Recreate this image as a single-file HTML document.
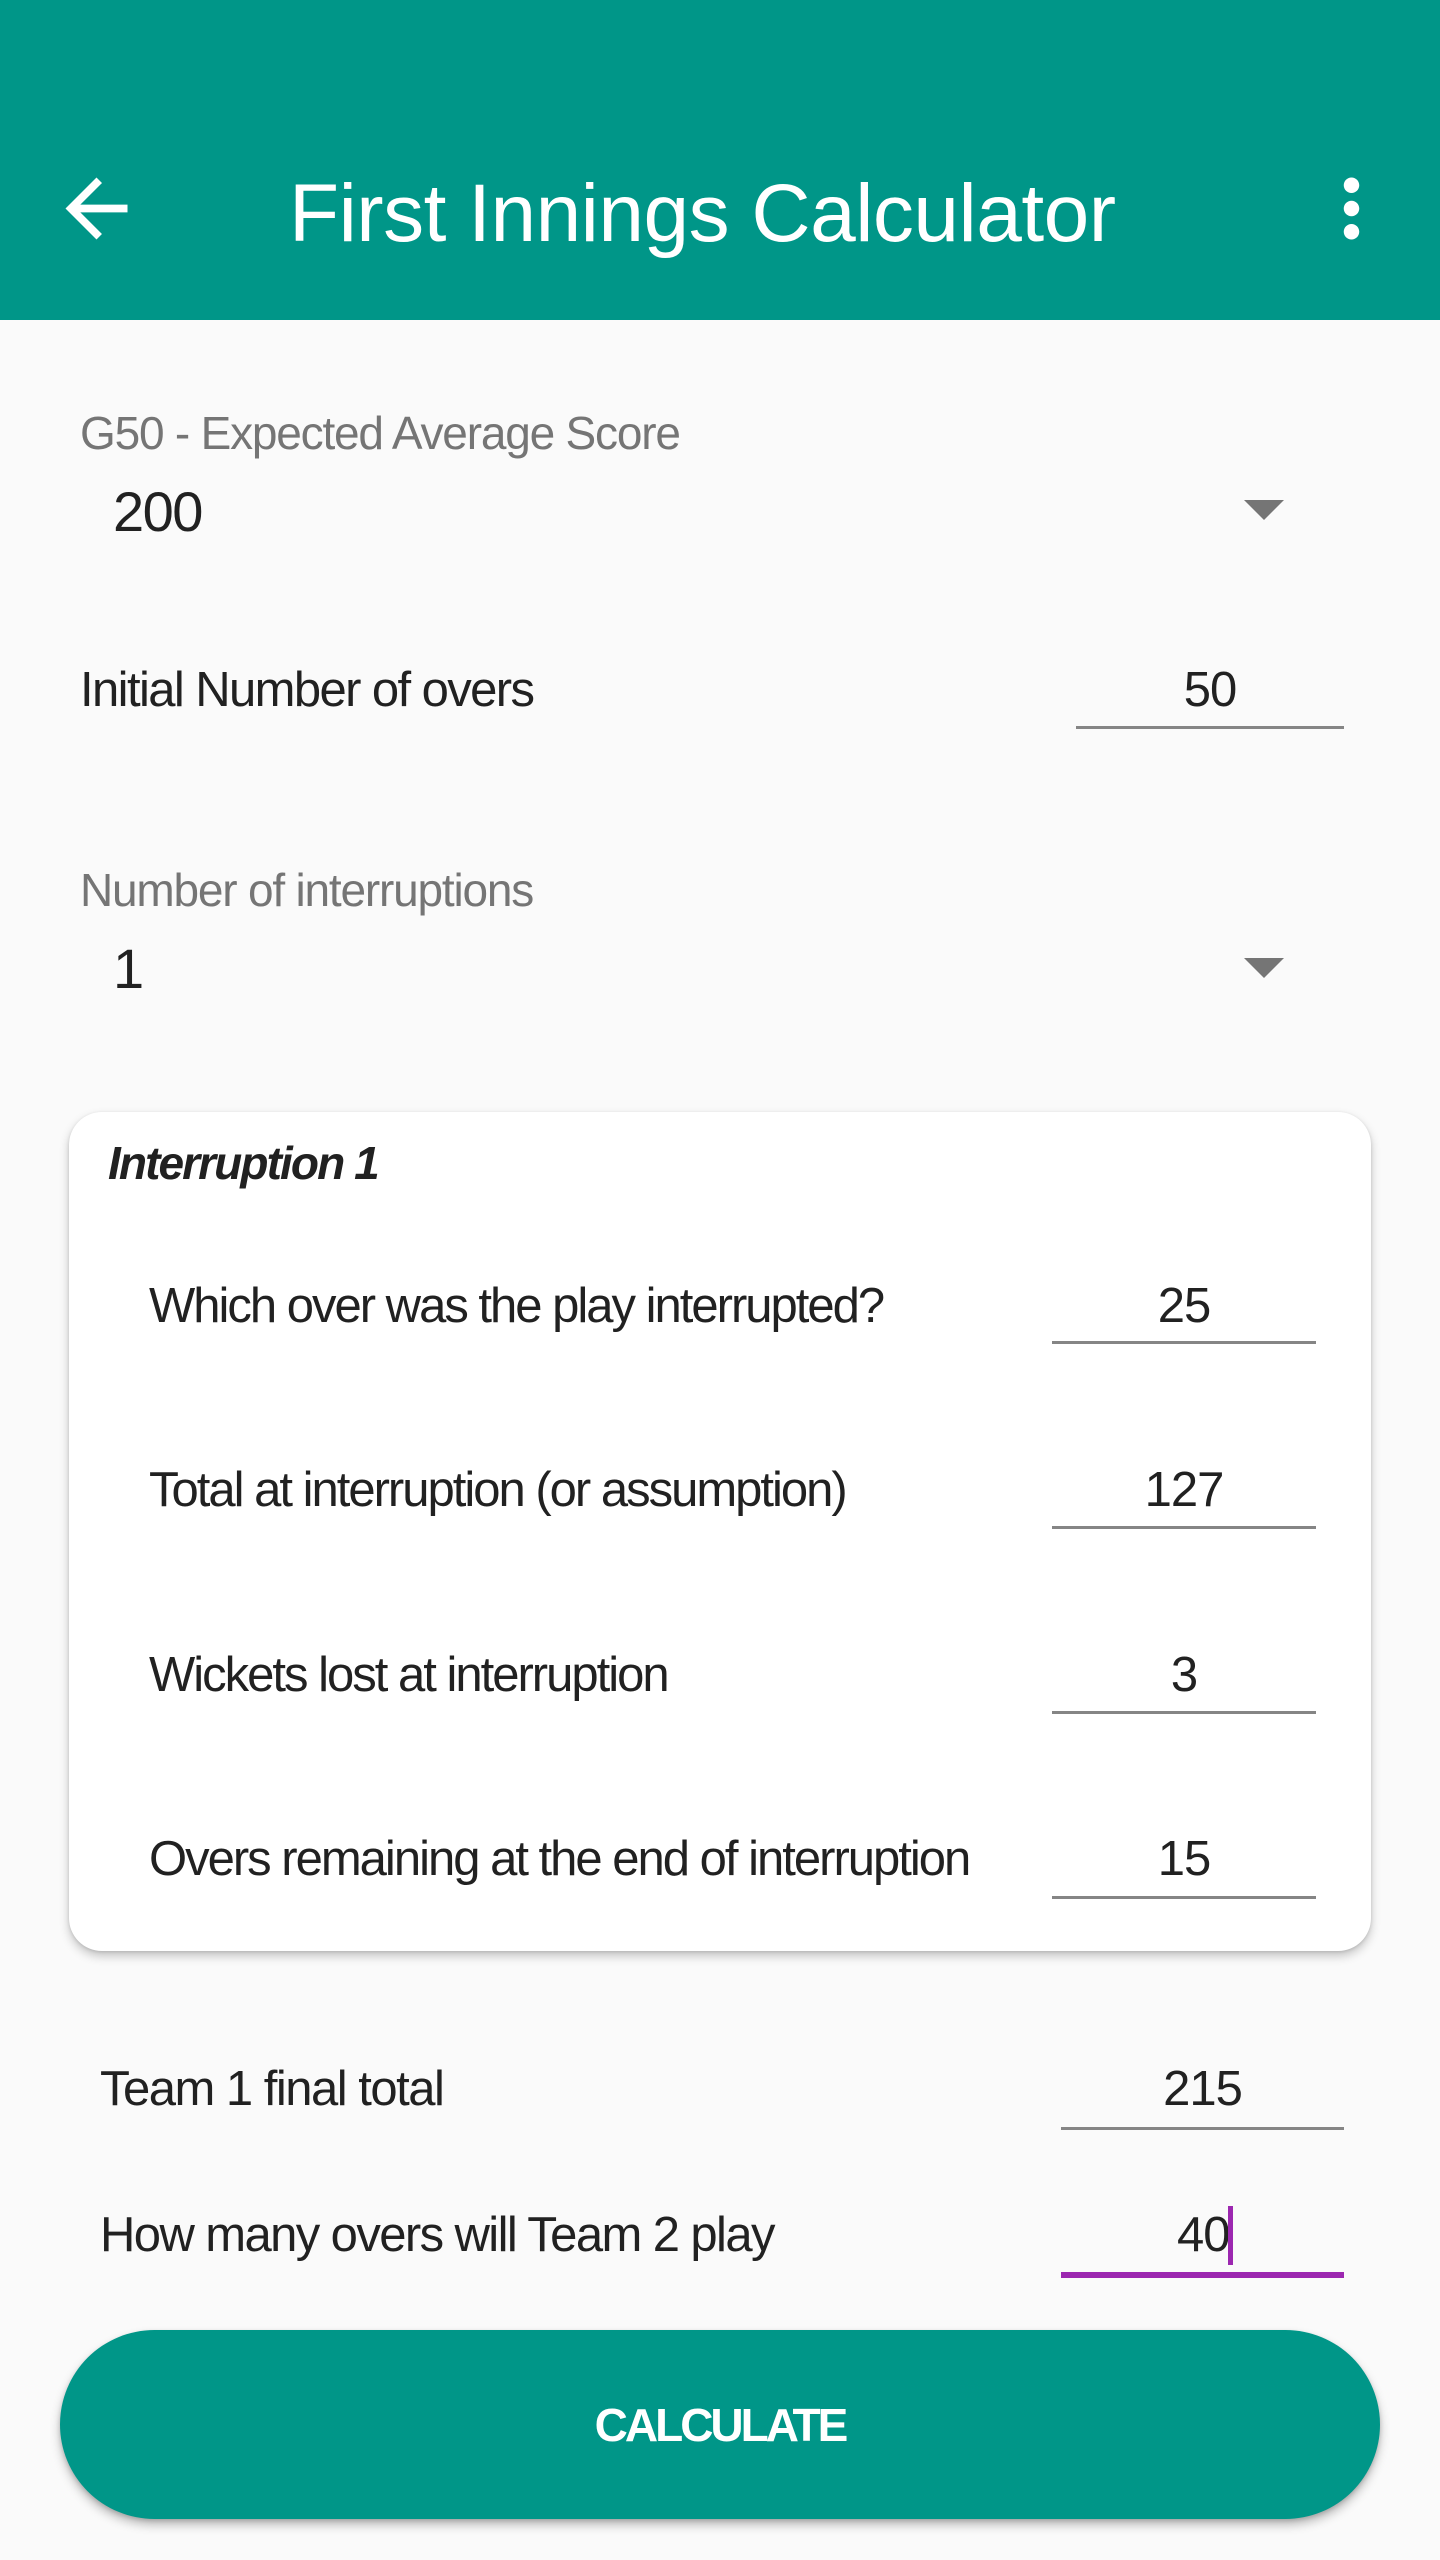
<!DOCTYPE html>
<html><head><meta charset="utf-8"><style>
html,body{margin:0;padding:0}
body{width:1440px;height:2560px;background:#fafafa;position:relative;overflow:hidden;font-family:"Liberation Sans",Arial,sans-serif;color:#212121}
.t{position:absolute;white-space:nowrap;line-height:1}
.bar{position:absolute;left:0;top:0;width:1440px;height:320px;background:#009688}
.ul{position:absolute;height:3px;background:#858585}
.v{position:absolute;text-align:center;line-height:1;font-size:49px;letter-spacing:-1px}
.r{font-size:49px;letter-spacing:-2px}
.card{position:absolute;left:69px;top:1112px;width:1302px;height:839px;background:#fff;border-radius:33px;box-shadow:0 5px 10px rgba(0,0,0,0.22),0 1px 3px rgba(0,0,0,0.12)}
.tri{position:absolute;width:0;height:0;border-left:20px solid transparent;border-right:20px solid transparent;border-top:20px solid #757575}
</style></head><body>
<div class="bar"></div>
<svg style="position:absolute;left:50px;top:162px" width="93" height="93" viewBox="0 0 24 24"><path fill="#fff" d="M20 11H7.83l5.59-5.59L12 4l-8 8 8 8 1.41-1.41L7.83 13H20v-2z"/></svg>
<div class="t" style="left:289px;top:173px;font-size:82px;color:#fff;letter-spacing:-0.5px">First Innings Calculator</div>
<svg style="position:absolute;left:1305px;top:162px" width="93" height="93" viewBox="0 0 24 24"><path fill="#fff" d="M12 8c1.1 0 2-.9 2-2s-.9-2-2-2-2 .9-2 2 .9 2 2 2zm0 2c-1.1 0-2 .9-2 2s.9 2 2 2 2-.9 2-2-.9-2-2-2zm0 6c-1.1 0-2 .9-2 2s.9 2 2 2 2-.9 2-2-.9-2-2-2z"/></svg>

<div class="t" style="left:80px;top:410px;font-size:46px;color:#757575;letter-spacing:-1.2px">G50 - Expected Average Score</div>
<div class="t" style="left:113px;top:484px;font-size:56px;letter-spacing:-1.5px">200</div>
<div class="tri" style="left:1244px;top:500px"></div>

<div class="t" style="left:80px;top:666px;font-size:49px;letter-spacing:-1.6px">Initial Number of overs</div>
<div class="v" style="left:1076px;width:268px;top:666px">50</div>
<div class="ul" style="left:1076px;width:268px;top:726px"></div>

<div class="t" style="left:80px;top:867px;font-size:46px;color:#757575;letter-spacing:-1.2px">Number of interruptions</div>
<div class="t" style="left:113px;top:941px;font-size:56px">1</div>
<div class="tri" style="left:1244px;top:958px"></div>

<div class="card"></div>
<div class="t" style="left:108px;top:1140px;font-size:46px;font-weight:bold;font-style:italic;letter-spacing:-1.9px">Interruption 1</div>

<div class="t r" style="left:149px;top:1282px">Which over was the play interrupted?</div>
<div class="v" style="left:1052px;width:264px;top:1282px">25</div>
<div class="ul" style="left:1052px;width:264px;top:1341px"></div>

<div class="t r" style="left:149px;top:1466px">Total at interruption (or assumption)</div>
<div class="v" style="left:1052px;width:264px;top:1466px">127</div>
<div class="ul" style="left:1052px;width:264px;top:1526px"></div>

<div class="t r" style="left:149px;top:1651px">Wickets lost at interruption</div>
<div class="v" style="left:1052px;width:264px;top:1651px">3</div>
<div class="ul" style="left:1052px;width:264px;top:1711px"></div>

<div class="t r" style="left:149px;top:1835px">Overs remaining at the end of interruption</div>
<div class="v" style="left:1052px;width:264px;top:1835px">15</div>
<div class="ul" style="left:1052px;width:264px;top:1896px"></div>

<div class="t" style="left:100px;top:2065px;font-size:49px;letter-spacing:-1.5px">Team 1 final total</div>
<div class="v" style="left:1061px;width:283px;top:2065px">215</div>
<div class="ul" style="left:1061px;width:283px;top:2127px"></div>

<div class="t" style="left:100px;top:2211px;font-size:49px;letter-spacing:-1.6px">How many overs will Team 2 play</div>
<div class="t" style="left:1177px;top:2211px;font-size:49px;letter-spacing:-1px">40</div>
<div style="position:absolute;left:1228px;top:2206px;width:5px;height:59px;background:#9c27b0"></div>
<div style="position:absolute;left:1061px;top:2272px;width:283px;height:6px;background:#9c27b0"></div>

<div style="position:absolute;left:60px;top:2330px;width:1320px;height:189px;border-radius:95px;background:#009688;box-shadow:0 6px 10px rgba(0,0,0,0.25),0 2px 4px rgba(0,0,0,0.15)"></div>
<div class="t" style="left:60px;width:1320px;text-align:center;top:2402px;font-size:46px;font-weight:bold;color:#fff;letter-spacing:-3px">CALCULATE</div>
</body></html>
